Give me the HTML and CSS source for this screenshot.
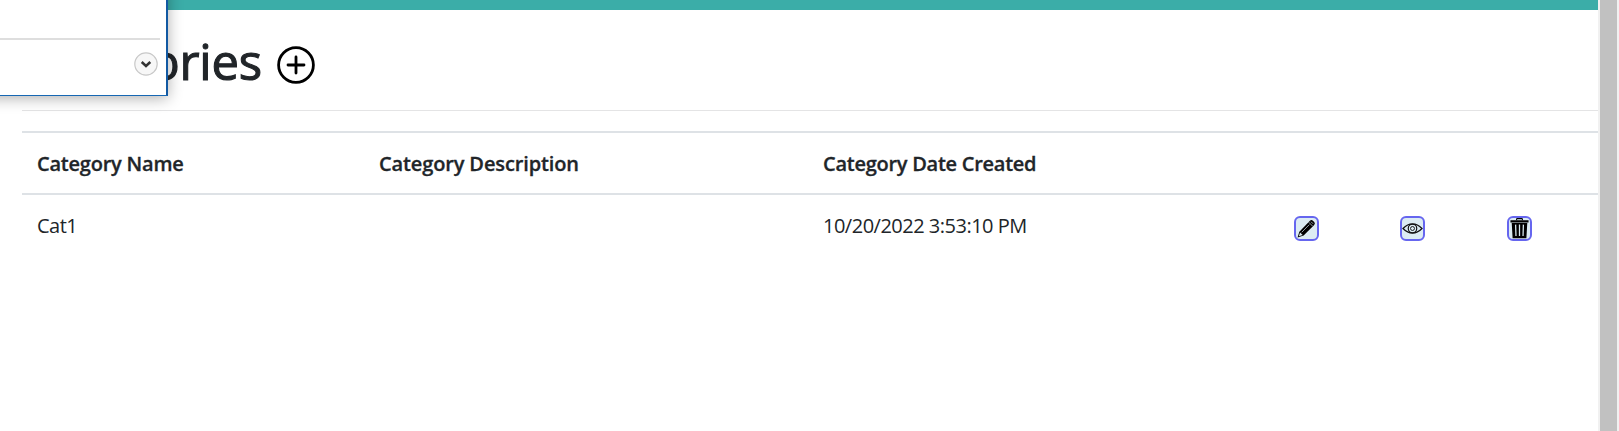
FILE: index.html
```html
<!DOCTYPE html>
<html lang="en">
<head>
<meta charset="utf-8">
<title>Categories</title>
<link rel="stylesheet" href="styles.css">
</head>
<body>
<div class="app">
  <main class="page">
    <div class="topbar"></div>
    <div class="content">
      <header class="heading">
        <h1 class="title">Categories</h1>
        <svg class="add" viewBox="0 0 38 38"><circle cx="19" cy="19" r="17.4"/><path d="M19 11v16M11 19h16"/></svg>
      </header>
      <div class="table">
        <div class="row head">
          <div class="cell"><span class="t-name">Category Name</span></div>
          <div class="cell"><span class="t-desc">Category Description</span></div>
          <div class="cell"><span class="t-date">Category Date Created</span></div>
          <div class="cell"></div><div class="cell"></div><div class="cell"></div>
        </div>
        <div class="row">
          <div class="cell"><span class="t-cat">Cat1</span></div>
          <div class="cell"></div>
          <div class="cell"><span class="t-stamp">10/20/2022 3:53:10 PM</span></div>
          <div class="cell action"><span class="btn"><svg viewBox="0 0 21 21"><path d="M.6 20.400l2-6.400L14.300 2q1.700-1.600 3.500.1l1 1q1.900 1.800.2 3.500L7.300 18.200z" fill="#000"/><path d="M2 19l1.400-4.200 2.900 2.900z" fill="#d8e9ef"/><path d="M5.200 14.700L13.600 6.200M13 3.600l4.400 4.400M15.500 3l2.300 2.300" stroke="#b9c9cf" stroke-width=".9" fill="none"/></svg></span></div>
          <div class="cell action"><span class="btn"><svg viewBox="0 0 21 21"><path d="M0 10.500Q5 5.400 10.500 5.400t10.500 5.100Q16 15.600 10.500 15.600T0 10.500z" fill="none" stroke="#111" stroke-width="1.400"/><circle cx="10.500" cy="10.500" r="4.700" fill="none" stroke="#111" stroke-width="1.300"/><circle cx="10.500" cy="10.500" r="2.200" fill="none" stroke="#111" stroke-width="1"/></svg></span></div>
          <div class="cell action"><span class="btn"><svg viewBox="0 0 21 21"><path d="M7.300 1.500V.3q0-.7.700-.7h5q.7 0 .7.700v1.200" fill="none" stroke="#000" stroke-width="1.200"/><path d="M.5 1.400h20v2.500H.5zM1.900 4.300h17.200l-1 17h-15.200z" fill="#000"/><path d="M6.200 6.200l.4 12.500M10.500 6.200v12.500M14.800 6.200l-.4 12.500" stroke="#d8e9ef" stroke-width="1.400"/></svg></span></div>
        </div>
      </div>
    </div>
  </main>
  <div class="scrollbar"><div class="thumb"></div></div>
  <aside class="popup">
    <div class="upper"></div>
    <div class="lower">
      <svg class="chevron" viewBox="0 0 24 24"><circle cx="12" cy="12" r="11.200"/><path d="M7.700 10l4.300 4 4.300-4"/></svg>
    </div>
  </aside>
</div>
</body>
</html>
```
FILE: styles.css
```css
* { box-sizing: border-box; }
body { margin: 0; overflow: hidden; background: #fff; color: #212529; font: 20px/30px "Segoe UI", "Open Sans", "Noto Sans", sans-serif; }
.app { position: relative; display: flex; height: 431px; overflow: hidden; }
.page { width: 1598px; }
.topbar { height: 10px; background: #3bada8; }
.content { padding-left: 22px; }
.heading { display: flex; align-items: center; height: 101px; margin-bottom: 20px; border-bottom: 1px solid #e4e4e5; }
.title { display: flex; justify-content: flex-end; width: 240px; margin: 0; padding-top: 2px; font-size: 49px; line-height: 60px; font-weight: 400; letter-spacing: -.2px; white-space: nowrap; -webkit-text-stroke: 1.100px #212529; }
.add { flex: none; width: 38px; height: 38px; margin: 10px 0 0 15px; fill: none; stroke: #000; stroke-width: 2.800; stroke-linecap: round; }
.table { border-top: 2px solid #dee2e6; }
.row { display: grid; grid-template-columns: 342px 444px 471px 106px 107px 106px; }
.head { border-bottom: 2px solid #dee2e6; font-weight: 600; -webkit-text-stroke: .3px #212529; }
.cell { height: 60px; padding: 16px 15px 14px; white-space: nowrap; }
.t-name { letter-spacing: -.22px; }
.t-desc { letter-spacing: -.13px; }
.t-date { letter-spacing: -.26px; }
.t-cat { letter-spacing: -.5px; }
.t-stamp { letter-spacing: -.5px; }
.action { padding-top: 21px; }
.btn { display: block; width: 25px; height: 25px; padding: 1px; border: 2px solid #6666ef; border-radius: 6px; background: #dcecf3; }
.btn svg { display: block; width: 19px; height: 19px; overflow: visible; }
.scrollbar { width: 21px; padding: 0 2px; background: #f1f1f1; }
.thumb { height: 100%; background: #c1c1c1; }
.popup { position: absolute; left: -20px; top: -20px; width: 188px; height: 116px; padding: 20px 6px 0 20px; background: #fff; border-right: 2px solid #1259a2; border-bottom: 1px solid #1667b3; box-shadow: 0 2px 14px rgba(0,0,0,.32); }
.upper { height: 40px; border-bottom: 2px solid #dedede; }
.lower { display: flex; justify-content: flex-end; padding: 12px 2px 0 0; }
.chevron { width: 24px; height: 24px; fill: #f7f7f7; stroke: #c8c8c8; stroke-width: 1.200; }
.chevron path { fill: none; stroke: #333; stroke-width: 2.500; }
```
